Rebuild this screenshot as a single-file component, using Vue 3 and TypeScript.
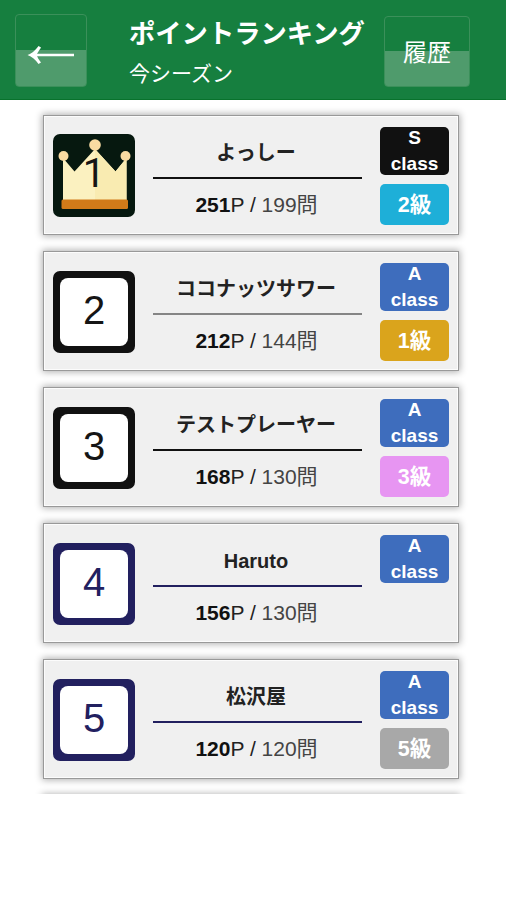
<script setup lang="ts">
interface Player {
  rank: number
  name: string
  points: number
  answered: number
  grade: string
  level?: string
  levelTone?: string
  tone: string
}

const players: Player[] = [
  { rank: 1, name: 'よっしー', points: 251, answered: 199, grade: 'S', level: '2級', levelTone: 'cyan', tone: 'crowned' },
  { rank: 2, name: 'ココナッツサワー', points: 212, answered: 144, grade: 'A', level: '1級', levelTone: 'gold', tone: 'silver' },
  { rank: 3, name: 'テストプレーヤー', points: 168, answered: 130, grade: 'A', level: '3級', levelTone: 'pink', tone: 'black' },
  { rank: 4, name: 'Haruto', points: 156, answered: 130, grade: 'A', tone: 'navy' },
  { rank: 5, name: '松沢屋', points: 120, answered: 120, grade: 'A', level: '5級', levelTone: 'gray', tone: 'navy' },
]
</script>

<template>
  <div class="screen">
    <header class="header">
      <button class="glass back" aria-label="戻る">
        <svg width="50" height="22" viewBox="0 0 50 22">
          <path d="M5 11H48" stroke="#fff" stroke-width="2.600" fill="none" />
          <path d="M1.500 11C7 9 10 5.500 12.500 2L15 3.500C12.500 7.500 11.500 9 10.500 11C11.500 13 12.500 15.500 15 18.500L12.500 20C9.500 16 6 12.500 1.500 11Z" fill="#fff" />
        </svg>
      </button>
      <div class="titles">
        <h1>ポイントランキング</h1>
        <p>今シーズン</p>
      </div>
      <button class="glass history">履歴</button>
    </header>
    <main class="list">
      <article v-for="p in players" :key="p.rank" class="card" :class="p.tone">
        <div class="rank">
          <svg v-if="p.rank === 1" width="82" height="83" viewBox="0 0 82 83">
            <path d="M10 67V24L21.500 37.500L42 15L62.500 37.500L73.500 24V67Z" fill="#fbf1c0" />
            <path d="M42 15L62.500 37.500L73.500 24V67H42Z" fill="#f9ebb1" />
            <circle cx="42" cy="11" r="5.800" fill="#f9dba2" />
            <circle cx="10.500" cy="22" r="5" fill="#f9dba2" />
            <circle cx="72.500" cy="22" r="5" fill="#f9dba2" />
            <rect x="8.500" y="65.500" width="66.500" height="9.500" rx="1.500" fill="#d27b19" />
          </svg>
          <span>{{ p.rank }}</span>
        </div>
        <div class="info">
          <div class="name">{{ p.name }}</div>
          <div class="rule"></div>
          <div class="score"><b>{{ p.points }}</b>P / <span>{{ p.answered }}問</span></div>
        </div>
        <div class="badges">
          <div class="grade" :class="'grade-' + p.grade">
            <span>{{ p.grade }}</span>
            <span>class</span>
          </div>
          <div v-if="p.level" class="level" :class="p.levelTone">{{ p.level }}</div>
        </div>
      </article>
      <article class="card"></article>
    </main>
  </div>
</template>

<style>
body {
  margin: 0;
  background: #fff;
}
</style>

<style scoped>
.screen {
  width: 506px;
  height: 900px;
  overflow: hidden;
  background: #fff;
  font-family: "Liberation Sans", "Noto Sans CJK JP", sans-serif;
}
.header {
  box-sizing: border-box;
  height: 100px;
  display: flex;
  align-items: flex-start;
  padding: 14px 36px 0 15px;
  background: #167f3f;
  border-bottom: 1px solid #08722c;
  color: #fff;
}
.glass {
  box-sizing: border-box;
  display: flex;
  align-items: center;
  justify-content: center;
  padding: 0;
  border: 1px solid #3b905a;
  border-radius: 4px;
  color: #fff;
  font-family: inherit;
  background: linear-gradient(#167f3f 0 50%, #4f9b6c 50% 100%);
}
.back {
  width: 72px;
  height: 73px;
  padding-top: 8px;
}
.titles {
  width: 255px;
  margin-left: 42px;
}
h1 {
  margin: 3px 0 0;
  font-size: 26.3px;
  line-height: 34px;
  font-weight: 700;
  white-space: nowrap;
}
p {
  margin: 8px 0 0;
  font-size: 21px;
  line-height: 29px;
}
.history {
  width: 86px;
  height: 71px;
  margin-top: 2px;
  padding-bottom: 3px;
  font-size: 24px;
}
.list {
  height: 694px;
  box-sizing: border-box;
  overflow: hidden;
  padding: 15px 47px 0 43px;
  display: flex;
  flex-direction: column;
  gap: 16px;
}
.card {
  --tone: #111;
  box-sizing: border-box;
  flex: 0 0 120px;
  display: flex;
  padding: 11px 9px 0 9px;
  border: 1px solid #999;
  background: #f0f0f0;
  box-shadow: 0 0 7px 1px rgba(0, 0, 0, 0.32), inset 0 0 0 1px #fcfcfc;
}
.rank {
  box-sizing: border-box;
  flex: none;
  width: 82px;
  height: 82px;
  margin-top: 8px;
  display: grid;
  place-items: center;
  border: 7px solid var(--tone);
  border-radius: 7px;
  background: var(--tone);
  font-size: 40px;
  line-height: 46px;
  color: #151515;
}
.rank span {
  box-sizing: border-box;
  width: 68px;
  height: 68px;
  padding-top: 9px;
  border-radius: 8px;
  background: #fff;
  text-align: center;
}
.crowned .rank {
  height: 83px;
  margin-top: 7px;
  border: 0;
  background: #06180f;
  font-family: Roboto, sans-serif;
}
.crowned .rank > * {
  grid-area: 1 / 1;
}
.crowned .rank span {
  background: none;
}
.info {
  width: 209px;
  margin-left: 18px;
  text-align: center;
  color: #222;
}
.name {
  height: 50px;
  padding-right: 3px;
  line-height: 53px;
  font-size: 20px;
  font-weight: 700;
  white-space: nowrap;
}
.rule {
  height: 2px;
  background: var(--line, var(--tone));
}
.score {
  height: 50px;
  padding-right: 2px;
  line-height: 52px;
  font-size: 21px;
  white-space: pre;
}
.score b {
  color: #111;
}
.score span {
  color: #444;
}
.silver {
  --line: #858585;
}
.navy {
  --tone: #22205f;
}
.navy .rank {
  color: #22205f;
}
.badges {
  width: 69px;
  margin-left: 18px;
  color: #fff;
  font-weight: 700;
  font-size: 19px;
  text-align: center;
}
.grade {
  height: 48px;
  display: flex;
  flex-direction: column;
  justify-content: center;
  line-height: 26px;
  border-radius: 5px;
}
.grade span {
  flex: none;
}
.grade-S {
  background: #111;
}
.grade-A {
  background: #3e6dbd;
}
.level {
  height: 41px;
  line-height: 42px;
  margin-top: 9px;
  border-radius: 5px;
  font-size: 21.5px;
}
.cyan {
  background: #1eafd8;
}
.gold {
  background: #daa41c;
}
.pink {
  background: #e795f2;
}
.gray {
  background: #a8a8a8;
}
</style>
